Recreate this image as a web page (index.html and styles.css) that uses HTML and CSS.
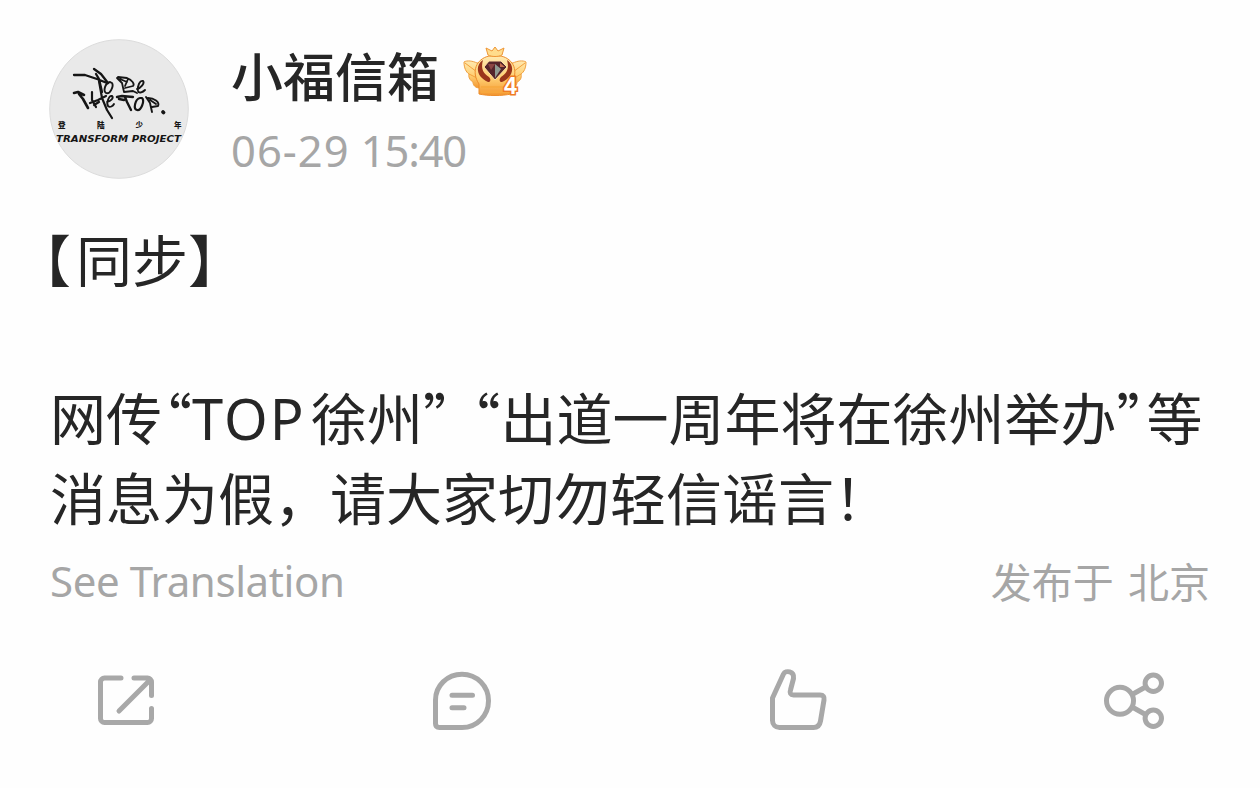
FILE: index.html
```html
<!DOCTYPE html>
<html lang="zh-CN">
<head>
  <meta charset="UTF-8">
  <meta name="viewport" content="width=device-width, initial-scale=1.0">
  <title>小福信箱</title>
  <link rel="stylesheet" href="styles.css">
</head>
<body>
  <article class="post">
    <header class="post-header">
      <svg class="avatar" viewBox="0 0 140 140">
        <circle cx="70" cy="70" r="69.3" fill="#e9e9e9" stroke="#dcdcdc"/>
        <!-- brush lettering -->
        <g fill="none" stroke="#151515" stroke-linecap="round" stroke-linejoin="round" stroke-width="1.9">
          <path d="M25 36l11 0 12 4 10 4M45 30l7 5 7 9M47 35l3 5 3 13" stroke-width="2.3"/>
          <path d="M61 43c-5 1-7 9-4 11 4 2 8-7 6-10l-2-1"/>
          <path d="M25 54l4-1 6 3M30 55l4 5 5 9" stroke-width="2.6"/>
          <path d="M43 53l0 8 4 7M50 42l3 17 5 12 5 8M41 64l8-3 8-4M45 66l5-3" stroke-width="2.2"/>
          <path d="M58 63c4-1 7-4 5-6-3-1-6 7-4 10 2 2 5 0 6-2"/>
          <path d="M68 39l5 5 2 9M69 38l9 1c5 2 8 6 6 8l-8 2M75 53l9-1 4 2M79 40l-3 7M71 40l7 3" stroke-width="1.8"/>
          <path d="M88 50c4-1 8-6 6-8-3-1-6 5-5 10 1 3 5 1 7-1"/>
          <path d="M68 58l5-1 11 1M70 60l5 1M76 58l2 5 4 8" stroke-width="2.4"/>
          <path d="M91 59c-5 1-7 11-3 12 4 1 8-9 5-12z" stroke-width="2.2"/>
          <path d="M97 58l4 6 2 9M99 59c6 0 12 4 10 8l-6 1M101 61l6 4" stroke-width="1.9"/>
          <path d="M114 73l.5.5" stroke-width="3.8"/>
        </g>
        <text class="avatar-cn" x="9" y="88.500">登</text>
        <text class="avatar-cn" x="48" y="88.500">陆</text>
        <text class="avatar-cn" x="86.500" y="88.500">少</text>
        <text class="avatar-cn" x="125" y="88.500">年</text>
        <text class="avatar-en" x="7" y="102.500" textLength="125" lengthAdjust="spacingAndGlyphs">TRANSFORM PROJECT</text>
      </svg>
      <div class="author">
        <div class="name-row">
          <span class="name">小福信箱</span>
          <svg class="badge" viewBox="0 0 64 52">
            <defs>
              <linearGradient id="gold" x1="0" y1="0" x2="0" y2="1">
                <stop offset="0" stop-color="#ffe9b0"/>
                <stop offset=".55" stop-color="#ffcf72"/>
                <stop offset="1" stop-color="#f3962f"/>
              </linearGradient>
            </defs>
            <path d="M14 17C10 15 4 14 1 16c0 6 2 10 5 12-1 4 2 7 4 8 0 4 3 6 7 6l30 0c4 0 7-2 7-6 3-1 5-4 4-8 3-2 5-6 5-12-3-2-9-1-13 1z" fill="url(#gold)" stroke="#f0a040"/>
            <path d="M2 17l12 9M6 28l10 5M62 17l-12 9M58 28l-8 5" stroke="#f3a03c" fill="none"/>
            <path d="M16 38C8 26 13 13 26 10h12c13 3 18 16 10 28v10c-9 2-23 2-32 0z" fill="url(#gold)" stroke="#ed8c2b"/>
            <path d="M20 14c-8 5-7 17 5 22 3 0 3-3 1-5-7-4-8-10-6-17zM44 14c8 5 7 17-5 22-3 0-3-3-1-5 7-4 8-10 6-17z" fill="#9a351b"/>
            <path d="M25 9L23 2l6 3 3-4 3 4 6-3-2 7c-4 2-10 2-14 0z" fill="#ffdc8c" stroke="#ee9636"/>
            <path d="M26 15h12l6 6-12 13-11-13z" fill="#55252b" stroke="#ffe0a4"/>
            <path d="M25 18h7l-4 6z" fill="#8c4644"/>
            <path d="M32 18l6 5-6 9z" fill="#8f9a91"/>
            <path d="M37 17l5 4h-5z" fill="#c86e50"/>
            <path d="M18 41h28M18 46h28" stroke="#f7a93e" stroke-width="1.500"/>
            <text class="badge-level" x="41" y="48">4</text>
          </svg>
        </div>
        <time class="time"><span class="date">06-29</span> <span class="clock">15:40</span></time>
      </div>
    </header>

    <div class="content">
      <p class="tag"><span class="bracket">【</span>同步】</p>
      <p class="line">网传<span class="quote open">“</span><span class="latin">TOP</span>徐州<span class="quote">”</span><span class="space"> </span><span class="quote">“</span>出道一周年将在徐州举办<span class="quote close">”</span>等</p>
      <p class="line">消息为假，请大家切勿轻信谣言！</p>
    </div>

    <div class="meta">
      <span class="translate">See Translation</span>
      <span class="place">发布于 北京</span>
    </div>

    <footer class="actions">
      <svg class="icon" viewBox="0 0 72 72">
        <path d="M32 14H15.500a4 4 0 0 0-4 4v36.500a4 4 0 0 0 4 4h43a4 4 0 0 0 4-4V44.500M45 14h13.500a4 4 0 0 1 4 4v13.500M60 17L30 47"/>
      </svg>
      <svg class="icon" viewBox="0 0 72 72">
        <path d="M38 10.200C23 10.200 11.500 22 11.500 36v23.500c0 2.500 1.500 4 4 4H38c15 0 26.500-12 26.500-26.700S53 10.200 38 10.200zM28 31.200h20.500M28 43.700h12"/>
      </svg>
      <svg class="icon" viewBox="0 0 72 72">
        <path d="M24.500 10c2-4 11-3 10 4.500L31.500 26c-1 3 0 5 3 5H61c3.500 0 4.500 2 4 5l-3.500 21c-.7 4-3 6.500-7 6.500h-34c-4 0-7-3-7-7V34z"/>
      </svg>
      <svg class="icon" viewBox="0 0 72 72">
        <circle cx="26" cy="36.700" r="13.500"/>
        <circle cx="59.300" cy="19.300" r="8.200"/>
        <circle cx="59.300" cy="54.300" r="8.200"/>
        <path d="M39 30l12.500-7M39 43.500l12.500 7"/>
      </svg>
    </footer>
  </article>
</body>
</html>
```
FILE: styles.css
```css
body {
  margin: 0;
  background-color: #fefefe;
  color: #262626;
  font-family: "Noto Sans", "Noto Sans CJK SC", sans-serif;
}
p {
  margin: 0;
}
.post {
  box-sizing: border-box;
  width: 1260px;
  height: 788px;
  padding: 39px 50px 0;
  overflow: hidden;
}
.post-header {
  display: flex;
  height: 140px;
}
.avatar {
  width: 140px;
  height: 140px;
  margin-left: -1px;
}
.avatar-cn {
  font: 900 7.5px "Noto Sans CJK SC", sans-serif;
  fill: #151515;
}
.avatar-en {
  font: italic bold 9px "DejaVu Sans", sans-serif;
  fill: #151515;
}
.author {
  margin-left: 42px;
}
.name-row {
  display: flex;
  align-items: flex-start;
  height: 79px;
}
.name {
  font: 500 52px/72px "Noto Sans CJK SC", sans-serif;
}
.badge {
  width: 64px;
  height: 52px;
  margin: 7px 0 0 24px;
}
.badge-level {
  font: bold 23px "Liberation Sans", sans-serif;
  fill: #fff;
  stroke: #ef7c22;
  stroke-width: 3px;
  paint-order: stroke;
}
.time {
  display: block;
  color: #a6a6a6;
  font-size: 43.5px;
  line-height: 64px;
}
.date {
  letter-spacing: 1px;
}
.clock {
  letter-spacing: -1.2px;
}
.content {
  margin-top: 39px;
  font-family: "Noto Sans CJK SC", sans-serif;
  font-size: 56px;
  line-height: 80px;
  white-space: nowrap;
}
.tag {
  height: 158px;
  margin-left: -35px;
}
.bracket {
  letter-spacing: 5px;
}
/* half-width curly quotes */
.quote {
  font-feature-settings: "halt";
}
.open {
  margin-left: 2px;
}
.close {
  margin-right: 2px;
}
.space {
  margin-right: 9px;
}
.latin {
  display: inline-block;
  width: 119px;
  font-family: "Noto Sans", sans-serif;
  letter-spacing: 2px;
  line-height: 1;
}
.meta {
  display: flex;
  justify-content: space-between;
  height: 60px;
  margin-top: 15px;
  color: #a6a6a6;
  font-size: 42px;
  line-height: 60px;
}
.translate {
  letter-spacing: -0.4px;
}
.place {
  margin-top: -1px;
  font-family: "Noto Sans CJK SC", sans-serif;
  font-size: 41px;
  word-spacing: 5px;
}
.actions {
  display: flex;
  justify-content: space-between;
  margin: 53px 44px 0 39px;
}
.icon {
  width: 72px;
  height: 72px;
  fill: none;
  stroke: #a8a8a8;
  stroke-width: 5;
  stroke-linecap: round;
  stroke-linejoin: round;
}
```
